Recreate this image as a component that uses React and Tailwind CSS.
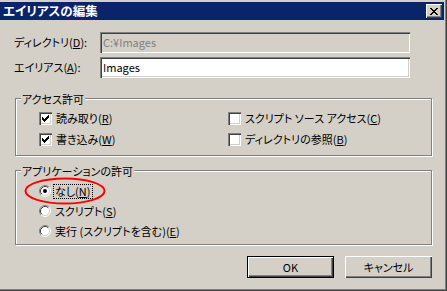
import React from "react";

const raisedBtn =
  "shadow-[inset_1px_1px_#ffffff,inset_-1px_-1px_#404040,inset_-2px_-2px_#808080]";
const sunken =
  "shadow-[inset_1px_1px_#808080,inset_2px_2px_#404040,inset_-1px_-1px_#ffffff,inset_-2px_-2px_#d4d0c8]";

function Check({ checked }) {
  return (
    <div className={`w-[13px] h-[13px] bg-white shrink-0 relative ${sunken}`}>
      {checked && (
        <svg width="7" height="7" viewBox="0 0 7 7" className="absolute left-[3px] top-[3px]" shapeRendering="crispEdges">
          <rect x="6" y="0" width="1" height="1" fill="#000" />
          <rect x="5" y="1" width="2" height="1" fill="#000" />
          <rect x="0" y="2" width="1" height="1" fill="#000" />
          <rect x="4" y="2" width="3" height="1" fill="#000" />
          <rect x="0" y="3" width="2" height="1" fill="#000" />
          <rect x="3" y="3" width="3" height="1" fill="#000" />
          <rect x="0" y="4" width="5" height="1" fill="#000" />
          <rect x="1" y="5" width="3" height="1" fill="#000" />
          <rect x="2" y="6" width="1" height="1" fill="#000" />
        </svg>
      )}
    </div>
  );
}

function Radio({ checked }) {
  return (
    <svg width="12" height="12" viewBox="0 0 12 12" className="shrink-0">
      <circle cx="6" cy="6" r="5" fill="#ffffff" />
      <path d="M2.11 9.89 A5.5 5.5 0 0 1 9.89 2.11" stroke="#808080" strokeWidth="1" fill="none" />
      <path d="M9.89 2.11 A5.5 5.5 0 0 1 2.11 9.89" stroke="#ffffff" strokeWidth="1" fill="none" />
      <path d="M2.82 9.18 A4.5 4.5 0 0 1 9.18 2.82" stroke="#404040" strokeWidth="1" fill="none" />
      <path d="M9.18 2.82 A4.5 4.5 0 0 1 2.82 9.18" stroke="#d4d0c8" strokeWidth="1" fill="none" />
      {checked && <circle cx="6" cy="6" r="2" fill="#000" />}
    </svg>
  );
}

function CheckRow({ checked, children }) {
  return (
    <div className="flex items-center h-[21px] gap-[4px]">
      <Check checked={checked} />
      <span className="leading-none">{children}</span>
    </div>
  );
}

function RadioRow({ checked, focus, children }) {
  return (
    <div className="flex items-center h-[20px] gap-[2px]">
      <Radio checked={checked} />
      <span
        className={`leading-[13px] px-[1px] border ${
          focus ? "border-dotted border-black" : "border-transparent"
        }`}
      >
        {children}
      </span>
    </div>
  );
}

function Group({ label, className, children }) {
  return (
    <div
      className={`relative ml-[15px] w-[417px] border border-[#808080] shadow-[inset_1px_1px_#ffffff,1px_1px_0_#ffffff] ${className}`}
    >
      <div className="absolute left-[5px] top-[-8px] px-[1px] bg-[#d4d0c8] leading-[16px]">
        {label}
      </div>
      {children}
    </div>
  );
}

export default function App() {
  return (
    <div className="w-[447px] h-[291px] bg-[#d4d0c8] relative overflow-hidden flex flex-col text-[11px] text-black font-['Noto_Sans_CJK_JP',sans-serif] [font-feature-settings:'palt'] shadow-[inset_-1px_-1px_#404040,inset_-2px_-2px_#808080]">
      {/* Title bar */}
      <div className="mt-[2px] mr-[3px] h-[18px] bg-[#0a246a] flex items-center justify-between pl-[3px] pr-[2px]">
        <span className="text-white font-bold text-[12.5px] leading-none">エイリアスの編集</span>
        <div className={`w-[16px] h-[14px] bg-[#d4d0c8] flex items-center justify-center ${raisedBtn}`}>
          <svg width="8" height="7" viewBox="0 0 8 7" shapeRendering="crispEdges">
            <path d="M0 0h2v1H0zM6 0h2v1H6zM1 1h2v1H1zM5 1h2v1H5zM2 2h4v1H2zM3 3h2v1H3zM2 4h4v1H2zM1 5h2v1H1zM5 5h2v1H5zM0 6h2v1H0zM6 6h2v1H6z" fill="#000" />
          </svg>
        </div>
      </div>

      {/* Fields */}
      <div className="mt-[12px] flex items-center h-[21px]">
        <div className="w-[100px] pl-[14px] leading-none">
          ディレクトリ(<u>D</u>):
        </div>
        <div className={`w-[310px] h-[21px] bg-[#d4d0c8] flex items-center pl-[3px] text-[#808080] ${sunken}`}>
          C:¥Images
        </div>
      </div>
      <div className="mt-[4px] flex items-center h-[21px]">
        <div className="w-[100px] pl-[14px] leading-none">
          エイリアス(<u>A</u>):
        </div>
        <div className={`w-[310px] h-[21px] bg-white flex items-center pl-[3px] ${sunken}`}>
          Images
        </div>
      </div>

      {/* Access permissions */}
      <Group label="アクセス許可" className="mt-[20px] h-[58px]">
        <div className="flex pt-[9px] pl-[23px]">
          <div className="w-[189px] flex flex-col">
            <CheckRow checked>
              読み取り(<u>R</u>)
            </CheckRow>
            <CheckRow checked>
              書き込み(<u>W</u>)
            </CheckRow>
          </div>
          <div className="flex flex-col">
            <CheckRow>
              スクリプト ソース アクセス(<u>C</u>)
            </CheckRow>
            <CheckRow>
              ディレクトリの参照(<u>B</u>)
            </CheckRow>
          </div>
        </div>
      </Group>

      {/* Application permissions */}
      <Group label="アプリケーションの許可" className="mt-[14px] h-[75px]">
        <div className="flex flex-col pt-[10px] pl-[23px]">
          <RadioRow checked focus>
            なし(<u>N</u>)
          </RadioRow>
          <RadioRow>
            スクリプト(<u>S</u>)
          </RadioRow>
          <RadioRow>
            実行 (スクリプトを含む)(<u>E</u>)
          </RadioRow>
        </div>
      </Group>

      {/* Buttons */}
      <div className="mt-[11px] flex justify-end gap-[11px] pr-[15px]">
        <div className="w-[87px] h-[22px] border border-black flex">
          <div className={`flex-1 flex items-center justify-center ${raisedBtn}`}>OK</div>
        </div>
        <div className={`w-[87px] h-[22px] flex items-center justify-center ${raisedBtn}`}>
          キャンセル
        </div>
      </div>

      {/* Red annotation ellipse */}
      <svg
        width="82"
        height="28"
        viewBox="0 0 82 28"
        className="absolute left-[24px] top-[177px] pointer-events-none"
      >
        <ellipse cx="41" cy="14" rx="39.5" ry="12.5" fill="none" stroke="#ff0000" strokeWidth="2" />
      </svg>
    </div>
  );
}
